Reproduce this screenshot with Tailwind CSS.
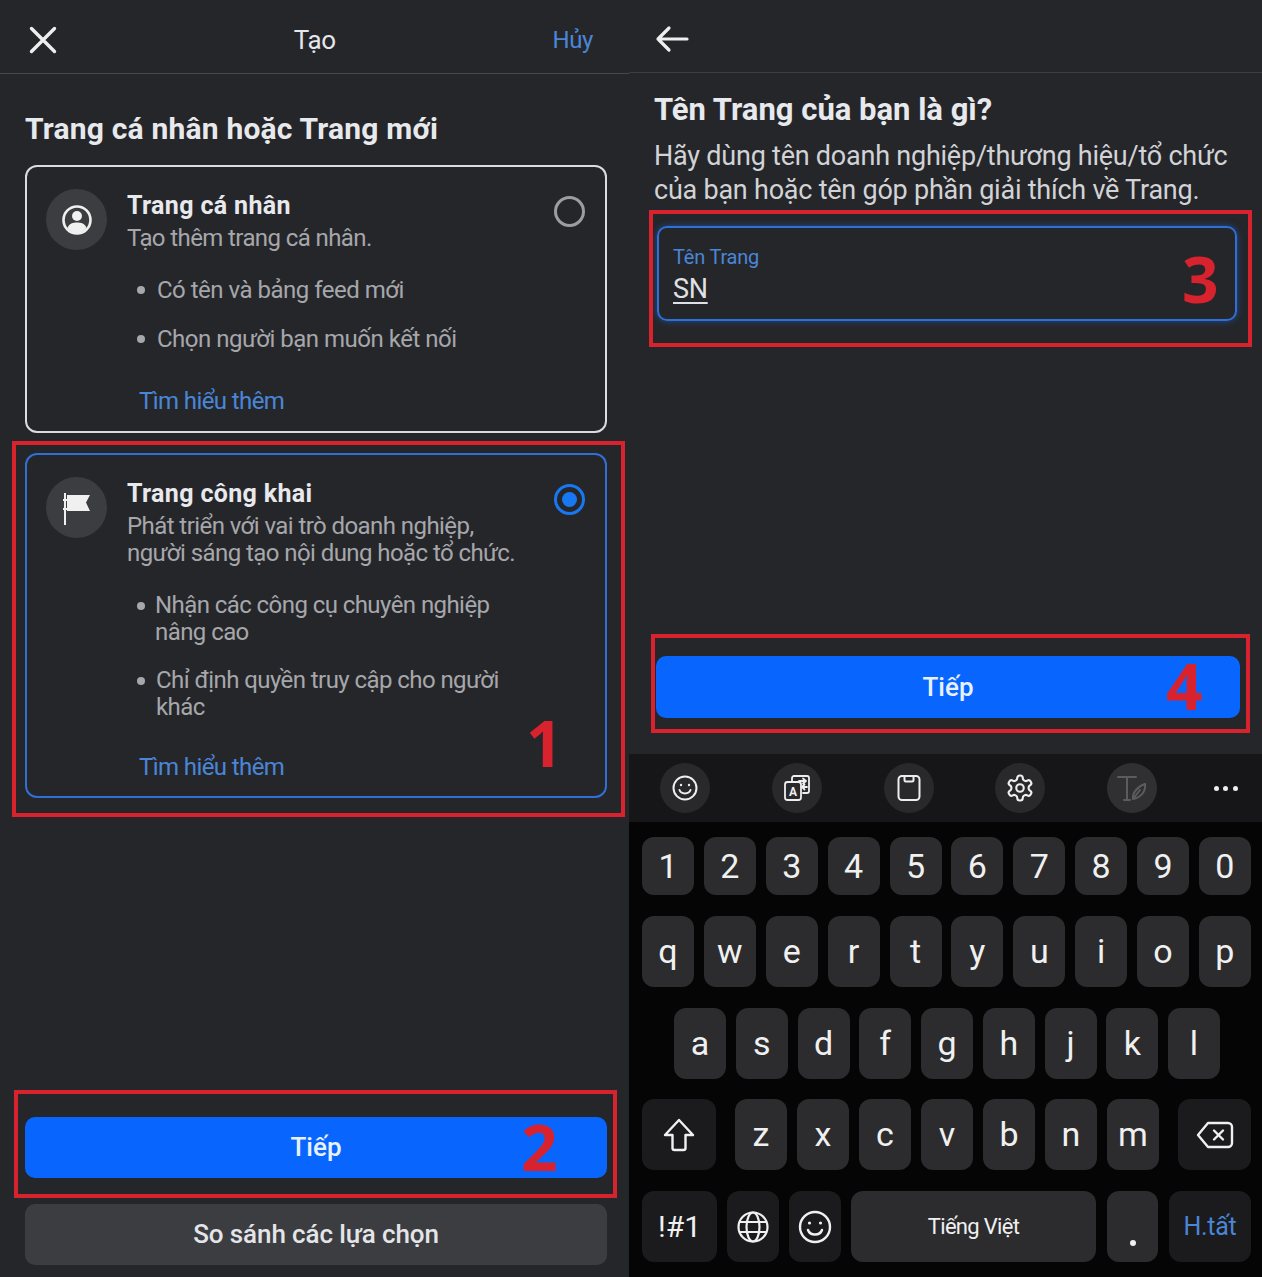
<!DOCTYPE html>
<html lang="vi">
<head>
<meta charset="UTF-8">
<title>Tạo Trang</title>
<script src="https://cdn.jsdelivr.net/npm/@tailwindcss/browser@4"></script>
</head>
<body class="bg-[#25262a] [font-family:Roboto,sans-serif] overflow-hidden">
<div class="flex w-[1262px] h-[1277px]">

  <!-- left screen -->
  <div class="relative w-[629px] h-full flex flex-col pl-[25px] pr-[22px] pb-[12px]">
    <div class="-ml-[25px] -mr-[22px] h-[74px] pl-[25px] pr-[25px] pt-[7px] border-b border-[#46474b] flex items-center justify-between flex-none">
      <svg class="w-[36px] h-[36px]" viewBox="0 0 36 36" fill="none" stroke="#eeeeee" stroke-width="3.4" stroke-linecap="round"><path d="M6.500 6.500 L29.500 29.500 M29.500 6.500 L6.500 29.500"/></svg>
      <span class="text-[26px] text-[#e6e7ea] tracking-[-0.3px] ml-[16px]">Tạo</span>
      <span class="text-[24px] text-[#4a86d8] mr-[11px] tracking-[-0.4px]">Hủy</span>
    </div>

    <h1 class="mt-[37px] text-[30px] leading-[36px] font-bold text-[#e8e9ec] tracking-[0.2px] whitespace-nowrap">Trang cá nhân hoặc Trang mới</h1>

    <div class="mt-[18px] h-[268px] border-2 border-[#dcdcdc] rounded-[12px] flex pl-[19px] pr-[20px] pt-[22px]">
      <div class="w-[61px] h-[61px] rounded-full bg-[#3c3d40] flex items-center justify-center flex-none">
        <svg class="w-[32px] h-[32px]" viewBox="0 0 32 32"><circle cx="16" cy="16" r="13.500" fill="none" stroke="#f0f0f0" stroke-width="2.600"/><circle cx="16" cy="12" r="5" fill="#f0f0f0"/><path d="M6.500 24 C8 19.500 12 18.500 16 18.500 C20 18.500 24 19.500 25.500 24 C23 27.500 19.500 29 16 29 C12.500 29 9 27.500 6.500 24 Z" fill="#f0f0f0"/></svg>
      </div>
      <div class="ml-[20px] mt-[1px] flex-1">
        <div class="text-[25px] leading-[32px] font-bold text-[#e8e9ec] tracking-[0.35px]">Trang cá nhân</div>
        <div class="mt-[3px] text-[24px] leading-[26px] text-[#a6a7aa] tracking-[-0.6px] whitespace-nowrap">Tạo thêm trang cá nhân.</div>
        <ul class="mt-[26px] pl-[10px] flex flex-col gap-[23px] text-[24px] leading-[26px] text-[#a6a7aa] tracking-[-0.5px] whitespace-nowrap">
          <li class="flex items-center gap-[12px]"><span class="w-[8px] h-[8px] rounded-full bg-[#a6a7aa]"></span>Có tên và bảng feed mới</li>
          <li class="flex items-center gap-[12px]"><span class="w-[8px] h-[8px] rounded-full bg-[#a6a7aa]"></span>Chọn người bạn muốn kết nối</li>
        </ul>
        <div class="mt-[36px] pl-[12px] text-[24px] leading-[26px] text-[#4a86d8] tracking-[-0.6px]">Tìm hiểu thêm</div>
      </div>
      <div class="w-[31px] h-[31px] mt-[7px] rounded-full border-[3px] border-[#9c9da0] flex-none"></div>
    </div>

    <div class="mt-[20px] h-[345px] border-2 border-[#2f6fd6] rounded-[12px] flex pl-[19px] pr-[20px] pt-[23px]">
      <div class="w-[61px] h-[61px] -mt-[1px] rounded-full bg-[#3c3d40] flex items-center justify-center flex-none">
        <svg class="w-[32px] h-[40px]" viewBox="0 0 32 40"><path d="M4 5 V37" stroke="#f0f0f0" stroke-width="2"/><path d="M6 7 H29 L25 14.500 L29 23 H6 Z" fill="#f0f0f0"/><path d="M2 12 H6 M2 21 H6" stroke="#f0f0f0" stroke-width="2"/></svg>
      </div>
      <div class="ml-[20px] flex-1">
        <div class="text-[25px] leading-[32px] font-bold text-[#e8e9ec] tracking-[0.35px]">Trang công khai</div>
        <div class="mt-[3px] text-[24px] leading-[27px] text-[#a6a7aa] tracking-[-0.57px] whitespace-nowrap">Phát triển với vai trò doanh nghiệp,<br>người sáng tạo nội dung hoặc tổ chức.</div>
        <ul class="mt-[25px] pl-[10px] flex flex-col gap-[21px] text-[24px] leading-[27px] text-[#a6a7aa] tracking-[-0.57px] whitespace-nowrap">
          <li class="flex gap-[10px]"><span class="w-[8px] h-[8px] mt-[10px] rounded-full bg-[#a6a7aa]"></span><span>Nhận các công cụ chuyên nghiệp<br>nâng cao</span></li>
          <li class="flex gap-[11px]"><span class="w-[8px] h-[8px] mt-[10px] rounded-full bg-[#a6a7aa]"></span><span>Chỉ định quyền truy cập cho người<br>khác</span></li>
        </ul>
        <div class="mt-[33px] pl-[12px] text-[24px] leading-[26px] text-[#4a86d8] tracking-[-0.6px]">Tìm hiểu thêm</div>
      </div>
      <div class="w-[31px] h-[31px] mt-[6px] rounded-full border-[3px] border-[#1877f2] flex items-center justify-center flex-none">
        <div class="w-[15px] h-[15px] rounded-full bg-[#1877f2]"></div>
      </div>
    </div>

    <div class="mt-auto h-[61px] rounded-[10px] bg-[#0866ff] flex items-center justify-center text-[26px] font-medium text-[#e8f1ff] tracking-[0px]">Tiếp</div>
    <div class="mt-[26px] h-[61px] rounded-[10px] bg-[#3c3d40] flex items-center justify-center text-[26px] font-medium text-[#e4e5e8] tracking-[-0.1px]">So sánh các lựa chọn</div>

    <!-- red annotations -->
    <div class="absolute left-[12px] top-[441px] w-[613px] h-[376px] border-[4px] border-[#d8222e]"></div>
    <div class="absolute left-[526px] top-[699px] text-[64px] leading-[88px] font-bold text-[#d8222e] [font-family:'Open_Sans',sans-serif]">1</div>
    <div class="absolute left-[14px] top-[1090px] w-[603px] h-[108px] border-[4px] border-[#d8222e]"></div>
    <div class="absolute left-[521px] top-[1103px] text-[64px] leading-[88px] font-bold text-[#d8222e] [font-family:'Open_Sans',sans-serif]">2</div>
  </div>

  <!-- right screen -->
  <div class="relative w-[633px] h-full flex flex-col">
    <div class="h-[73px] pl-[26px] pt-[5px] border-b border-[#3c3d40] flex items-center flex-none">
      <svg class="w-[34px] h-[28px]" viewBox="0 0 34 28" fill="none" stroke="#eeeeee" stroke-width="3.200" stroke-linecap="round" stroke-linejoin="round"><path d="M32 14 H3 M14 3 L3 14 L14 25"/></svg>
    </div>
    <div class="px-[25px] flex-none">
      <h2 class="mt-[19px] text-[31px] leading-[36px] font-bold text-[#e8e9ec] whitespace-nowrap">Tên Trang của bạn là gì?</h2>
      <p class="mt-[11px] text-[27px] leading-[34px] text-[#d2d3d6] tracking-[-0.23px] whitespace-nowrap">Hãy dùng tên doanh nghiệp/thương hiệu/tổ chức<br>của bạn hoặc tên góp phần giải thích về Trang.</p>
    </div>
    <div class="ml-[28px] w-[580px] mt-[19px] h-[95px] border-2 border-[#2f6fd6] rounded-[10px] px-[14px] pt-[16px] flex-none shadow-[0_0_6px_#1d4f9a]">
      <div class="text-[20px] leading-[26px] text-[#4a86d8] tracking-[-0.2px]">Tên Trang</div>
      <div class="mt-[3px] text-[27px] leading-[32px] text-[#e0e1e4] underline underline-offset-[4px] tracking-[-0.3px]">SN</div>
    </div>
    <div class="ml-[27px] w-[584px] mt-[335px] h-[62px] rounded-[10px] bg-[#0866ff] flex items-center justify-center text-[26px] font-medium text-[#e8f1ff] flex-none">Tiếp</div>

    <div class="mt-[36px] h-[68px] bg-[#161618] flex items-center flex-none pl-[31px] gap-[61.75px]">
      <div class="w-[50px] h-[50px] rounded-full bg-[#29292b] flex items-center justify-center">
        <svg class="w-[28px] h-[28px]" viewBox="0 0 28 28" fill="none" stroke="#eeeeee" stroke-width="2" stroke-linecap="round"><circle cx="14" cy="14" r="11.500"/><path d="M8.500 16 C10 20.500 18 20.500 19.500 16"/><circle cx="10" cy="11" r="1.200" fill="#eeeeee" stroke="none"/><circle cx="18" cy="11" r="1.200" fill="#eeeeee" stroke="none"/></svg>
      </div>
      <div class="w-[50px] h-[50px] rounded-full bg-[#29292b] flex items-center justify-center">
        <svg class="w-[28px] h-[28px]" viewBox="0 0 28 28" fill="none" stroke="#eeeeee" stroke-width="1.800" stroke-linecap="round" stroke-linejoin="round"><path d="M9 7 V4 A2 2 0 0 1 11 2 H24 A2 2 0 0 1 26 4 V17 A2 2 0 0 1 24 19 H20"/><rect x="2" y="8" width="16" height="18" rx="2.500"/><path d="M16 7 H23 M20 4.500 L23 7 L20 9.500 M24 13 H19 M21.500 10.500 L19 13 L21.500 15.500"/><text x="10" y="22" font-size="12" font-weight="700" fill="#eeeeee" stroke="none" text-anchor="middle" font-family="Roboto">A</text></svg>
      </div>
      <div class="w-[50px] h-[50px] rounded-full bg-[#29292b] flex items-center justify-center">
        <svg class="w-[24px] h-[28px]" viewBox="0 0 24 28" fill="none" stroke="#eeeeee" stroke-width="2" stroke-linejoin="round"><rect x="1.500" y="2" width="21" height="24" rx="3.500"/><path d="M7.500 2 V6 A1.500 1.500 0 0 0 9 7.500 H15 A1.500 1.500 0 0 0 16.500 6 V2"/></svg>
      </div>
      <div class="w-[50px] h-[50px] rounded-full bg-[#29292b] flex items-center justify-center">
        <svg class="w-[30px] h-[30px]" viewBox="0 0 24 24" fill="none" stroke="#eeeeee" stroke-width="1.700" stroke-linecap="round" stroke-linejoin="round"><path d="M12.220 2h-.44a2 2 0 0 0-2 2v.18a2 2 0 0 1-1 1.730l-.43.25a2 2 0 0 1-2 0l-.15-.08a2 2 0 0 0-2.730.73l-.22.38a2 2 0 0 0 .73 2.730l.15.1a2 2 0 0 1 1 1.720v.51a2 2 0 0 1-1 1.740l-.15.09a2 2 0 0 0-.73 2.730l.22.38a2 2 0 0 0 2.730.73l.15-.08a2 2 0 0 1 2 0l.43.25a2 2 0 0 1 1 1.730V20a2 2 0 0 0 2 2h.44a2 2 0 0 0 2-2v-.18a2 2 0 0 1 1-1.730l.43-.25a2 2 0 0 1 2 0l.15.08a2 2 0 0 0 2.730-.73l.22-.39a2 2 0 0 0-.73-2.730l-.15-.08a2 2 0 0 1-1-1.740v-.5a2 2 0 0 1 1-1.740l.15-.09a2 2 0 0 0 .73-2.730l-.22-.38a2 2 0 0 0-2.730-.73l-.15.08a2 2 0 0 1-2 0l-.43-.25a2 2 0 0 1-1-1.730V4a2 2 0 0 0-2-2z"/><circle cx="12" cy="12" r="3"/></svg>
      </div>
      <div class="w-[50px] h-[50px] rounded-full bg-[#303032] flex items-center justify-center">
        <svg class="w-[32px] h-[28px]" viewBox="0 0 32 28" fill="none" stroke="#5c5c5e" stroke-width="2" stroke-linecap="round"><path d="M2 3 H20 M11 3 V26 M8 26 H14"/><path d="M17 25 C16 19 22 12 29 10 C30 17 25 24 17 25 Z M17 25 L24 16"/></svg>
      </div>
      <div class="w-[24px] -ml-[5px] flex justify-between">
        <span class="w-[5px] h-[5px] rounded-full bg-[#eeeeee]"></span><span class="w-[5px] h-[5px] rounded-full bg-[#eeeeee]"></span><span class="w-[5px] h-[5px] rounded-full bg-[#eeeeee]"></span>
      </div>
    </div>

    <!-- keyboard -->
    <div class="flex-1 bg-[#050506] pl-[13px] pr-[11px] pt-[15px] flex flex-col text-[#f0f0f0] text-[34px]">
      <div class="flex justify-between h-[58px]">
        <div class="w-[52px] rounded-[12px] bg-[#2c2c2e] flex items-center justify-center">1</div>
        <div class="w-[52px] rounded-[12px] bg-[#2c2c2e] flex items-center justify-center">2</div>
        <div class="w-[52px] rounded-[12px] bg-[#2c2c2e] flex items-center justify-center">3</div>
        <div class="w-[52px] rounded-[12px] bg-[#2c2c2e] flex items-center justify-center">4</div>
        <div class="w-[52px] rounded-[12px] bg-[#2c2c2e] flex items-center justify-center">5</div>
        <div class="w-[52px] rounded-[12px] bg-[#2c2c2e] flex items-center justify-center">6</div>
        <div class="w-[52px] rounded-[12px] bg-[#2c2c2e] flex items-center justify-center">7</div>
        <div class="w-[52px] rounded-[12px] bg-[#2c2c2e] flex items-center justify-center">8</div>
        <div class="w-[52px] rounded-[12px] bg-[#2c2c2e] flex items-center justify-center">9</div>
        <div class="w-[52px] rounded-[12px] bg-[#2c2c2e] flex items-center justify-center">0</div>
      </div>
      <div class="mt-[21px] flex justify-between h-[71px]">
        <div class="w-[52px] rounded-[12px] bg-[#2c2c2e] flex items-center justify-center">q</div>
        <div class="w-[52px] rounded-[12px] bg-[#2c2c2e] flex items-center justify-center">w</div>
        <div class="w-[52px] rounded-[12px] bg-[#2c2c2e] flex items-center justify-center">e</div>
        <div class="w-[52px] rounded-[12px] bg-[#2c2c2e] flex items-center justify-center">r</div>
        <div class="w-[52px] rounded-[12px] bg-[#2c2c2e] flex items-center justify-center">t</div>
        <div class="w-[52px] rounded-[12px] bg-[#2c2c2e] flex items-center justify-center">y</div>
        <div class="w-[52px] rounded-[12px] bg-[#2c2c2e] flex items-center justify-center">u</div>
        <div class="w-[52px] rounded-[12px] bg-[#2c2c2e] flex items-center justify-center">i</div>
        <div class="w-[52px] rounded-[12px] bg-[#2c2c2e] flex items-center justify-center">o</div>
        <div class="w-[52px] rounded-[12px] bg-[#2c2c2e] flex items-center justify-center">p</div>
      </div>
      <div class="mt-[21px] flex justify-between h-[71px] pl-[32px] pr-[31px]">
        <div class="w-[52px] rounded-[12px] bg-[#2c2c2e] flex items-center justify-center">a</div>
        <div class="w-[52px] rounded-[12px] bg-[#2c2c2e] flex items-center justify-center">s</div>
        <div class="w-[52px] rounded-[12px] bg-[#2c2c2e] flex items-center justify-center">d</div>
        <div class="w-[52px] rounded-[12px] bg-[#2c2c2e] flex items-center justify-center">f</div>
        <div class="w-[52px] rounded-[12px] bg-[#2c2c2e] flex items-center justify-center">g</div>
        <div class="w-[52px] rounded-[12px] bg-[#2c2c2e] flex items-center justify-center">h</div>
        <div class="w-[52px] rounded-[12px] bg-[#2c2c2e] flex items-center justify-center">j</div>
        <div class="w-[52px] rounded-[12px] bg-[#2c2c2e] flex items-center justify-center">k</div>
        <div class="w-[52px] rounded-[12px] bg-[#2c2c2e] flex items-center justify-center">l</div>
      </div>
      <div class="mt-[20px] flex h-[71px]">
        <div class="w-[74px] rounded-[12px] bg-[#1b1b1d] flex items-center justify-center">
          <svg class="w-[32px] h-[36px]" viewBox="0 0 32 36" fill="none" stroke="#f0f0f0" stroke-width="2.400" stroke-linejoin="round"><path d="M16 3 L30 18 H22.500 V31 A2 2 0 0 1 20.500 33 H11.500 A2 2 0 0 1 9.500 31 V18 H2 Z"/></svg>
        </div>
        <div class="mx-[19px] flex-1 flex justify-between">
          <div class="w-[52px] rounded-[12px] bg-[#2c2c2e] flex items-center justify-center">z</div>
          <div class="w-[52px] rounded-[12px] bg-[#2c2c2e] flex items-center justify-center">x</div>
          <div class="w-[52px] rounded-[12px] bg-[#2c2c2e] flex items-center justify-center">c</div>
          <div class="w-[52px] rounded-[12px] bg-[#2c2c2e] flex items-center justify-center">v</div>
          <div class="w-[52px] rounded-[12px] bg-[#2c2c2e] flex items-center justify-center">b</div>
          <div class="w-[52px] rounded-[12px] bg-[#2c2c2e] flex items-center justify-center">n</div>
          <div class="w-[52px] rounded-[12px] bg-[#2c2c2e] flex items-center justify-center">m</div>
        </div>
        <div class="w-[73px] rounded-[12px] bg-[#1b1b1d] flex items-center justify-center">
          <svg class="w-[38px] h-[28px]" viewBox="0 0 38 28" fill="none" stroke="#f0f0f0" stroke-width="2.400" stroke-linejoin="round" stroke-linecap="round"><path d="M12 2 H32 A4 4 0 0 1 36 6 V22 A4 4 0 0 1 32 26 H12 L2 14 Z"/><path d="M18 9.500 L27 18.500 M27 9.500 L18 18.500"/></svg>
        </div>
      </div>
      <div class="mt-[21px] flex h-[71px]">
        <div class="w-[75px] rounded-[12px] bg-[#1b1b1d] flex items-center justify-center text-[30px]">!#1</div>
        <div class="ml-[10px] w-[52px] rounded-[12px] bg-[#1b1b1d] flex items-center justify-center">
          <svg class="w-[32px] h-[32px]" viewBox="0 0 32 32" fill="none" stroke="#f0f0f0" stroke-width="2.200"><circle cx="16" cy="16" r="14.500"/><ellipse cx="16" cy="16" rx="6.500" ry="14.500"/><path d="M2 11 H30 M2 21 H30"/></svg>
        </div>
        <div class="ml-[10px] w-[52px] rounded-[12px] bg-[#1b1b1d] flex items-center justify-center">
          <svg class="w-[34px] h-[34px]" viewBox="0 0 34 34" fill="none" stroke="#f0f0f0" stroke-width="2.400" stroke-linecap="round"><circle cx="17" cy="17" r="15"/><path d="M10 20 C12 26 22 26 24 20"/><circle cx="11.500" cy="13" r="1.600" fill="#f0f0f0" stroke="none"/><circle cx="22.500" cy="13" r="1.600" fill="#f0f0f0" stroke="none"/></svg>
        </div>
        <div class="ml-[10px] w-[245px] rounded-[12px] bg-[#2c2c2e] flex items-center justify-center text-[22px] tracking-[-0.7px]">Tiếng Việt</div>
        <div class="ml-[11px] w-[51px] rounded-[12px] bg-[#2c2c2e] flex items-end justify-center pb-[16px]"><span class="w-[6px] h-[6px] rounded-full bg-[#f0f0f0]"></span></div>
        <div class="ml-[11px] w-[82px] rounded-[12px] bg-[#1b1b1d] flex items-center justify-center text-[25px] text-[#4a86d8] tracking-[-0.3px]">H.tất</div>
      </div>
    </div>

    <!-- red annotations -->
    <div class="absolute left-[20px] top-[210px] w-[603px] h-[137px] border-[4px] border-[#d8222e]"></div>
    <div class="absolute left-[553px] top-[235px] text-[64px] leading-[88px] font-bold text-[#d8222e] [font-family:'Open_Sans',sans-serif]">3</div>
    <div class="absolute left-[22px] top-[634px] w-[599px] h-[99px] border-[4px] border-[#d8222e]"></div>
    <div class="absolute left-[537px] top-[642px] text-[64px] leading-[88px] font-bold text-[#d8222e] [font-family:'Open_Sans',sans-serif]">4</div>
  </div>
</div>
</body>
</html>
